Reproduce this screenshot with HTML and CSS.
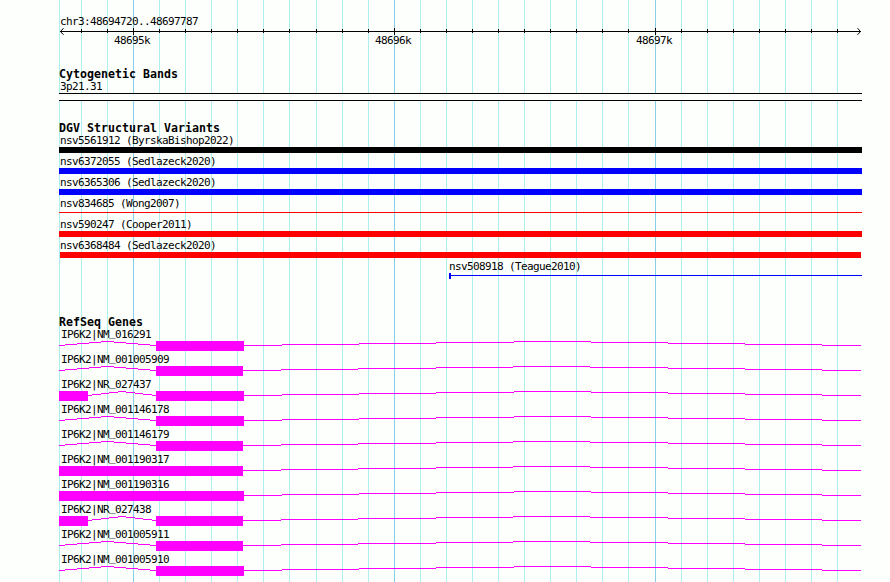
FILE: index.html
```
<!DOCTYPE html>
<html lang="en">
<head>
  <meta charset="UTF-8" />
  <meta name="viewport" content="width=device-width, initial-scale=1.0"/>
  <title>chr3:48694720..48697787</title>
  <link rel="stylesheet" href="styles.css">
</head>
<body>

<div class="browser">
  <!-- Vertical grid lines -->
  <svg class="gridlines" id="gridlines" width="890" height="582"></svg>

  <main class="tracks">
    <!-- Ruler -->
    <section class="ruler">
      <div class="label region">chr3:48694720..48697787</div>
      <svg class="scale" id="scale" width="803" height="8" viewBox="59 28 803 8"></svg>
      <div class="scale-labels label">
        <span>48695k</span>
        <span>48696k</span>
        <span>48697k</span>
      </div>
    </section>

    <!-- Cytogenetic Bands -->
    <section class="cyto">
      <h2 class="track-title">Cytogenetic Bands</h2>
      <div class="label">3p21.31</div>
      <div class="band"></div>
    </section>

    <!-- Structural Variants -->
    <section class="variants">
      <h2 class="track-title">DGV Structural Variants</h2>
      <div class="variant"><div class="label">nsv5561912 (ByrskaBishop2022)</div><div class="bar black"></div></div>
      <div class="variant"><div class="label">nsv6372055 (Sedlazeck2020)</div><div class="bar blue"></div></div>
      <div class="variant"><div class="label">nsv6365306 (Sedlazeck2020)</div><div class="bar blue"></div></div>
      <div class="variant"><div class="label">nsv834685 (Wong2007)</div><div class="bar thin red"></div></div>
      <div class="variant"><div class="label">nsv590247 (Cooper2011)</div><div class="bar red"></div></div>
      <div class="variant"><div class="label">nsv6368484 (Sedlazeck2020)</div><div class="bar inset red"></div></div>
      <div class="variant partial"><div class="label">nsv508918 (Teague2010)</div><div class="bar open-end"></div></div>
    </section>

    <!-- Genes -->
    <section class="genes">
      <h2 class="track-title">RefSeq Genes</h2>
      <div id="genes"></div>
    </section>
  </main>
</div>

<script>
  const minor = [59, 81, 107, 159, 185, 211, 237, 263, 289, 316, 342, 368, 420, 446, 472, 498,
    524, 550, 576, 602, 628, 681, 707, 733, 759, 785, 811, 837];
  const major = [133, 394, 655];

  // exons are [start, end] pairs in track pixels
  const genes = [
    { name: 'NM_016291', exons: [[156, 244]] },
    { name: 'NM_001005909', exons: [[156, 243]] },
    { name: 'NR_027437', exons: [[59, 88], [156, 244]] },
    { name: 'NM_001146178', exons: [[156, 244]] },
    { name: 'NM_001146179', exons: [[156, 243]] },
    { name: 'NM_001190317', exons: [[59, 243]] },
    { name: 'NM_001190316', exons: [[59, 244]] },
    { name: 'NR_027438', exons: [[59, 88], [156, 243]] },
    { name: 'NM_001005911', exons: [[156, 243]] },
    { name: 'NM_001005910', exons: [[156, 244]] }
  ];

  function rect(x, y, w, h, cls) {
    return `<rect class="${cls}" x="${x}" y="${y}" width="${w}" height="${h}"/>`;
  }

  function renderGrid() {
    document.getElementById('gridlines').innerHTML =
      minor.map(x => rect(x, 0, 1, 582, 'minor')).join('') +
      major.map(x => rect(x, 0, 1, 582, 'major')).join('');
  }

  function renderScale() {
    document.getElementById('scale').innerHTML =
      rect(60, 31, 801, 1, 'ink') +
      minor.slice(1).map(x => rect(x, 29, 1, 4, 'ink')).join('') +
      major.map(x => rect(x, 28, 1, 7, 'ink')).join('') +
      '<path class="arrow" d="M63.5 28.2L60.5 31.5L63.5 34.8M857.5 28.2L860.5 31.5L857.5 34.8"/>';
  }

  // Intron: rises one pixel at a time to the middle, then falls back
  function intron(start, end) {
    const step = (end - start) / 16;
    const rise = [0, 1, 2, 3, 4, 3, 2, 1, 0];
    let out = '';
    rise.forEach((up, i) => {
      const a = i === 0 ? Math.ceil(start) : Math.round(start + step * (2 * i - 1));
      const b = i === 8 ? end : Math.round(start + step * (2 * i + 1));
      out += rect(a, 4 - up, b - a, 1, 'gene-fill');
    });
    return out;
  }

  function renderGenes() {
    document.getElementById('genes').innerHTML = genes.map(gene => {
      let shapes = '';
      let pos = 59;
      gene.exons.forEach(([start, end]) => {
        if (start > pos) shapes += intron(pos, start);
        shapes += rect(start, 0, end - start, 10, 'gene-fill');
        pos = end;
      });
      shapes += intron(pos - 0.6, 861);
      // lift the underscore clear of the exon below it
      const name = gene.name.replace('_', '<span class="underscore">_</span>');
      return `<div class="gene">
        <div class="label">IP6K2|${name}</div>
        <svg width="803" height="10" viewBox="59 0 803 10">${shapes}</svg>
      </div>`;
    }).join('');
  }

  renderGrid();
  renderScale();
  renderGenes();
</script>
</body>
</html>
```
FILE: styles.css
```
/* Base Reset */
* { margin: 0; padding: 0; box-sizing: border-box; }
body {
  background: #fdfffc;
  color: #000;
  font-family: "DejaVu Sans Mono", "Liberation Mono", monospace;
  overflow: hidden;
}

svg { display: block; }

/* Grid lines share one cell with the tracks */
.browser {
  display: grid;
  width: 890px;
  height: 582px;
  overflow: hidden;
}

.gridlines, .tracks { grid-area: 1 / 1; }

.minor { fill: #afeeee; }
.major { fill: #87ceeb; }
.ink { fill: #000; }
.arrow { fill: none; stroke: #000; stroke-width: 1; }

.tracks {
  width: 862px;
  padding: 15px 0 0 59px;
}

/* Text */
.label {
  height: 11px;
  padding-left: 1px;
  font-size: 11px;
  line-height: 10px;
  letter-spacing: -0.622px;
  white-space: pre;
}

.underscore {
  line-height: 0;
  vertical-align: 2px;
}

.track-title {
  height: 14px;
  font-size: 11.6px;
  line-height: 14px;
  letter-spacing: 0.017px;
  font-weight: bold;
  white-space: pre;
}

/* Ruler */
.ruler { height: 52px; }
.region { line-height: 14px; }
.scale { margin-top: 2px; }

.scale-labels {
  display: flex;
  gap: 225px;
  padding-left: 55px;
}

/* Cytogenetic Bands */
.cyto { height: 54px; }

.cyto .label { margin-top: 1px; }

.band {
  height: 8px;
  border: solid #000;
  border-width: 1px 0;
  background: #fdfffc;
}

/* Structural Variants */
.variants {
  height: 194px;
}

.variant { height: 21px; }
.variants .track-title { height: 15px; }

.bar { height: 6px; }
.bar.thin { height: 1px; margin-top: 2px; }
.bar.inset { margin: 0 1px; }

.black { background: #000; }
.blue { background: #00f; }
.red { background: #f00; }

.partial {
  margin-left: 390px;
}

.partial .label { padding-left: 0; }

.open-end {
  border-left: 2px solid #00f;
  background: linear-gradient(#00f, #00f) 0 2px / 100% 1px no-repeat;
}

/* Genes */
.gene { height: 25px; }
.gene .label { padding-left: 2px; }
.genes .track-title { height: 15px; }
.gene-fill { fill: #f0f; }
```
